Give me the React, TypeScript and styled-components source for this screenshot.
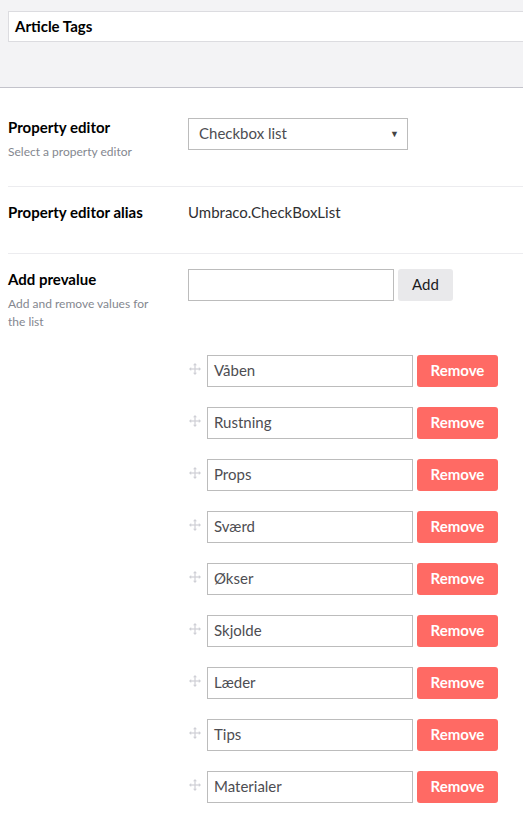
import React from 'react';
import styled, { createGlobalStyle } from 'styled-components';

const GlobalStyle = createGlobalStyle`
    body {
        margin: 0;
        background: #fff;
        font-family: Lato, "Open Sans", sans-serif;
        color: #1b1b1d;
    }
`

const Header = styled.div`
    height: 88px;
    box-sizing: border-box;
    padding: 11px 0 0 8px;
    background: #f3f3f5;
    border-bottom: 1px solid #c3c3cb;
    overflow: hidden;
`

const NameInput = styled.div`
    width: 640px;
    height: 31px;
    box-sizing: border-box;
    background: #fff;
    border: 1px solid #dcdce0;
    padding: 0 6px;
    font-size: 15px;
    font-weight: 700;
    line-height: 28px;
    color: #000;
`

const Body = styled.div`
    padding: 14px 0 0 8px;
`

const PropertyRow = styled.div<{ $last?: boolean }>`
    display: flex;
    padding: 15px 0 25px;
    border-bottom: ${p => (p.$last ? 'none' : '1px solid #ececef')};
`

const LabelCol = styled.div`
    width: 180px;
    flex-shrink: 0;
`

const Label = styled.div`
    font-size: 15px;
    font-weight: 700;
    line-height: 20px;
    color: #000;
`

const Description = styled.div`
    margin-top: 6px;
    font-size: 12px;
    line-height: 18px;
    color: #84878f;
    padding-right: 20px;
`

const ControlCol = styled.div`
    flex: 1;
    font-size: 15px;
    line-height: 20px;
    color: #303033;
`

const Select = styled.div`
    position: relative;
    width: 220px;
    height: 32px;
    box-sizing: border-box;
    border: 1px solid #bcbcbc;
    padding: 0 10px;
    line-height: 29px;
    color: #4d4d52;
    margin-top: 1px;
`

const Caret = styled.span`
    position: absolute;
    right: 8px;
    top: 0;
    font-size: 9px;
    color: #444;
`

const InlineGroup = styled.div`
    display: flex;
    align-items: flex-start;
    gap: 4px;
`

const TextInput = styled.div`
    width: 206px;
    height: 32px;
    box-sizing: border-box;
    border: 1px solid #bcbcbc;
    padding: 0 6px;
    line-height: 29px;
    color: #4d4d52;
    background: #fff;
`

const Button = styled.div<{ $danger?: boolean }>`
    height: 32px;
    box-sizing: border-box;
    border-radius: 3px;
    line-height: 30px;
    text-align: center;
    font-size: 15px;
    font-weight: ${p => (p.$danger ? 700 : 400)};
    width: ${p => (p.$danger ? '81px' : '55px')};
    background: ${p => (p.$danger ? '#ff6a64' : '#e9e9eb')};
    color: ${p => (p.$danger ? '#fff' : '#1b1b1d')};
`

const ValueList = styled.div`
    margin-top: 54px;
    display: flex;
    flex-direction: column;
    gap: 20px;
`

const ValueRow = styled.div`
    display: flex;
    align-items: flex-start;
    gap: 4px;
`

const Handle = styled.div`
    width: 14px;
    padding-top: 8px;
    display: flex;
    justify-content: flex-start;
    margin-left: 1px;
`

const DragIcon = () => (
    <svg width="12" height="12" viewBox="0 0 12 12">
        <g fill="#cfd0d6">
            <rect x="5.4" y="1.5" width="1.2" height="9" />
            <rect x="1.5" y="5.4" width="9" height="1.2" />
            <polygon points="6,0 8,2.2 4,2.2" />
            <polygon points="6,12 8,9.8 4,9.8" />
            <polygon points="0,6 2.2,4 2.2,8" />
            <polygon points="12,6 9.8,4 9.8,8" />
        </g>
    </svg>
)

const values = ['Våben', 'Rustning', 'Props', 'Sværd', 'Økser', 'Skjolde', 'Læder', 'Tips', 'Materialer']

const App = (): JSX.Element => {
    return (
        <>
            <GlobalStyle />
            <Header>
                <NameInput>Article Tags</NameInput>
            </Header>
            <Body>
                <PropertyRow>
                    <LabelCol>
                        <Label>Property editor</Label>
                        <Description>Select a property editor</Description>
                    </LabelCol>
                    <ControlCol>
                        <Select>
                            Checkbox list
                            <Caret>▼</Caret>
                        </Select>
                    </ControlCol>
                </PropertyRow>
                <PropertyRow>
                    <LabelCol>
                        <Label>Property editor alias</Label>
                        <Description />
                    </LabelCol>
                    <ControlCol>Umbraco.CheckBoxList</ControlCol>
                </PropertyRow>
                <PropertyRow $last>
                    <LabelCol>
                        <Label>Add prevalue</Label>
                        <Description>Add and remove values for the list</Description>
                    </LabelCol>
                    <ControlCol>
                        <InlineGroup>
                            <TextInput />
                            <Button>Add</Button>
                        </InlineGroup>
                        <ValueList>
                            {values.map(v => (
                                <ValueRow key={v}>
                                    <Handle><DragIcon /></Handle>
                                    <TextInput>{v}</TextInput>
                                    <Button $danger>Remove</Button>
                                </ValueRow>
                            ))}
                        </ValueList>
                    </ControlCol>
                </PropertyRow>
            </Body>
        </>
    )
}

export default App;
